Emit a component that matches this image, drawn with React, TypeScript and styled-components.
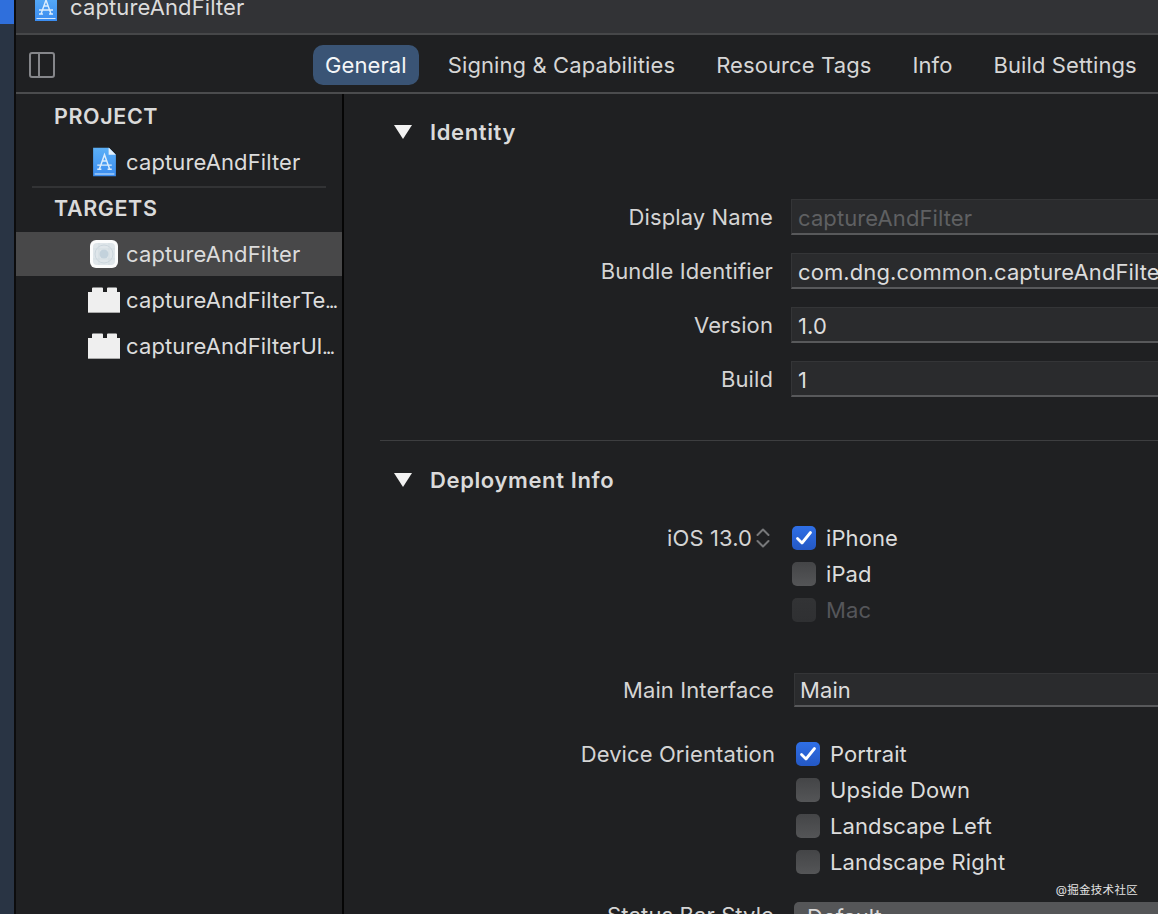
import React from "react";
import styled, { createGlobalStyle } from "styled-components";

const Global = createGlobalStyle`
  html, body { margin: 0; padding: 0; background: #1f2022; }
  body { font-family: Inter, "Noto Sans", "Liberation Sans", sans-serif; }
  * { box-sizing: border-box; }
`;
const Page = styled.div`
  position: relative; display: flex; width: 1158px; height: 914px; overflow: hidden; background: #1f2022;
  -webkit-font-smoothing: antialiased;
`;
const Strip = styled.div`
  width: 16px; flex: none; background: #293444; border-right: 2px solid #0c0c0d;
  &::before { content: ""; display: block; height: 24px; width: 14px; background: #2f6fdc; }
`;
const Main = styled.div`flex: 1; min-width: 0; display: flex; flex-direction: column;`;
const TitleBar = styled.div`
  height: 35px; flex: none; display: flex; align-items: flex-end; gap: 13px; padding: 0 0 12px 19px;
  background: #323336; border-bottom: 2px solid #464749;
  font-size: 22px; line-height: 28px; color: #dcdcdc; letter-spacing: .12px;
`;
const TabBar = styled.div`
  height: 59px; flex: none; display: flex; align-items: center; padding: 3px 0 0 13px;
  border-bottom: 2px solid #4b4c4e; background: #1f2022;
`;
const SideToggle = styled.svg`width: 26px; height: 26px; flex: none; margin-right: 258px;`;
const Tab = styled.div<{ $active?: boolean }>`
  height: 40px; display: flex; align-items: center; padding: 0 12px; margin-right: 17px;
  border-radius: 10px; font-size: 22px; letter-spacing: .1px; white-space: nowrap;
  color: ${p => (p.$active ? "#f4f6f8" : "#d6d6d6")};
  background: ${p => (p.$active ? "#3a5475" : "transparent")};
`;
const Body = styled.div`flex: 1; min-height: 0; display: flex;`;
const Sidebar = styled.div`
  width: 328px; flex: none; border-right: 2px solid #050505; background: #1f2022; padding-top: 1px;
`;
const SideHead = styled.div<{ $lift: number }>`
  height: 44px; display: flex; align-items: center; padding: 0 0 ${p => p.$lift}px 38px;
  font-size: 21.5px; font-weight: 600; color: #dadada; letter-spacing: .6px;
`;
const SideRow = styled.div<{ $selected?: boolean }>`
  height: 46px; display: flex; align-items: center; position: relative; padding-left: 110px;
  font-size: 22px; letter-spacing: .12px; color: #dcdcdc; white-space: pre;
  background: ${p => (p.$selected ? "#484849" : "transparent")};
  ${p => p.$selected && "height: 44px; margin-bottom: 1px;"}
`;
const Squeezed = styled.span`letter-spacing: -.4px;`;
const Dots = styled.span`font-size: 20px; letter-spacing: -2px;`;
const RowIcon = styled.svg<{ $left: number }>`
  position: absolute; left: ${p => p.$left}px; top: 50%; transform: translateY(-50%);
`;
const SideDivider = styled.div`height: 2px; background: #323335; margin: 1px 16px 0 16px;`;
const Content = styled.div`flex: 1; min-width: 0; padding-left: 36px; overflow: hidden;`;
const Heading = styled.div<{ $h: number }>`
  height: ${p => p.$h}px; display: flex; align-items: center; gap: 18px; padding-left: 14px;
  font-size: 22px; font-weight: 600; color: #dadada; letter-spacing: .62px;
`;
const Triangle = styled.div`
  width: 18px; height: 14px; background: #f2f2f2; clip-path: polygon(0 0, 100% 0, 50% 100%);
`;
const Fields = styled.div`display: flex; flex-direction: column; gap: 18px; margin-top: 29px;`;
const FormRow = styled.div<{ $top?: number; $labelEnd: number; $gap?: number; $start?: boolean }>`
  display: grid; grid-template-columns: ${p => p.$labelEnd}px 1fr; column-gap: ${p => p.$gap ?? 18}px;
  align-items: ${p => (p.$start ? "start" : "center")};
  margin-top: ${p => p.$top ?? 0}px;
`;
const Label = styled.div`
  text-align: right; font-size: 22px; letter-spacing: .1px; color: #d4d4d4; white-space: nowrap;
  display: flex; justify-content: flex-end; align-items: center;
`;
const TallLabel = styled(Label)`height: 36px;`;
const Field = styled.div<{ $dim?: boolean; $h?: number; $pad?: number }>`
  height: ${p => p.$h ?? 36}px; margin-right: -10px; display: flex; align-items: center;
  padding: ${p => (p.$h ? 0 : 2)}px 0 0 ${p => p.$pad ?? 6}px;
  background: #2a2b2d; border-top: 1px solid #343537; border-left: 1px solid #343537; border-bottom: 2px solid #58595b;
  font-size: 22px; letter-spacing: .1px; white-space: nowrap; overflow: hidden;
  color: ${p => (p.$dim ? "#5f6062" : "#dcdcdc")};
`;
const Divider = styled.div`height: 1px; background: #3d3e40; margin-top: 43px;`;
const CheckRow = styled.div`height: 36px; display: flex; align-items: center; gap: 10px;`;
const CheckGroup = styled.div`display: flex; flex-direction: column;`;
const Box = styled.div<{ $on?: boolean; $off?: boolean }>`
  width: 24px; height: 24px; border-radius: 5px; flex: none; display: flex; align-items: center; justify-content: center;
  background: ${p => (p.$on ? "linear-gradient(#2f6fe6,#2458c4)" : p.$off ? "linear-gradient(#323335,#2f3032)" : "linear-gradient(#444547,#545557)")};
`;
const CheckText = styled.div<{ $off?: boolean }>`
  font-size: 22px; letter-spacing: .1px; color: ${p => (p.$off ? "#55565a" : "#dcdcdc")}; white-space: nowrap;
`;
const Stepper = styled.svg`margin: 0 2px 0 3px; flex: none;`;
const CutField = styled.div`
  height: 30px; margin-right: -10px; padding-left: 13px; background: #555658; border-radius: 5px 0 0 0;
  font-size: 22px; line-height: 22px; padding-top: 4px; color: #dcdcdc; overflow: hidden;
`;
const CutLabel = styled(Label)`height: 30px; align-items: flex-start; line-height: 24px; padding-top: 1px;`;
const Mark = styled.div`
  position: absolute; right: 20px; top: 882px; font-size: 11.5px; line-height: 16px; letter-spacing: .3px; color: #e4e4e4;
  font-family: Inter, "Noto Sans CJK SC", sans-serif;
`;
const DocGlyph = styled.svg`flex: none; display: block;`;

const DocPaths = () => (
  <>
    <defs>
      <linearGradient id="docFill" x1="0" y1="0" x2="0" y2="1">
        <stop offset="0" stopColor="#5cb0f7" />
        <stop offset="1" stopColor="#3a8cf0" />
      </linearGradient>
    </defs>
    <path d="M0 0h15l7 7v21H0z" fill="url(#docFill)" />
    <path d="M15 0l7 7h-7z" fill="#e4f1fc" />
    <path d="M1.5 25h19v1h-19z" fill="#d6e9fc" />
    <path d="M6 21 11 7l5 14M4 17h14M4 21h4M14 21h4M8.5 13h5" stroke="#dcedfc" strokeWidth="1.4" fill="none" />
  </>
);
const TargetIcon = () => (
  <RowIcon $left={74} width={28} height={28} viewBox="0 0 28 28">
    <rect width="28" height="28" rx="6" fill="#fbfcfc" />
    <rect x="3" y="3" width="22" height="22" rx="4" fill="#dfe6ea" />
    <circle cx="14" cy="14" r="9" fill="none" stroke="#cbd6dd" />
    <circle cx="14" cy="14" r="4.5" fill="#c3d2dc" />
    <path d="M3 9h22M3 19h22M9 3v22M19 3v22" stroke="#d0dae0" strokeWidth=".7" />
  </RowIcon>
);
const BrickIcon = () => (
  <RowIcon $left={72} width={32} height={26} viewBox="0 0 32 26">
    <path d="M4 5V1.5Q4 .5 5 .5h9q1 0 1 1V5h4V1.5q0-1 1-1h8q1 0 1 1V5h3v21H0V5z" fill="#efefef" />
    <path d="M0 25h32v1H0z" fill="#a9a9a9" />
  </RowIcon>
);
const Check = ({ on, label, off }: { on?: boolean; label: string; off?: boolean }) => (
  <CheckRow>
    <Box $on={on} $off={off}>
      {on && (
        <svg width="18" height="16" viewBox="0 0 18 16">
          <path d="M2.5 8.5 7 13 15.5 2.5" fill="none" stroke="#fff" strokeWidth="2.8" strokeLinecap="round" strokeLinejoin="round" />
        </svg>
      )}
    </Box>
    <CheckText $off={off}>{label}</CheckText>
  </CheckRow>
);

export default function App() {
  return (
    <Page>
      <Global />
      <Strip />
      <Main>
        <TitleBar>
          <DocGlyph width={22} height={28} viewBox="0 0 22 28"><DocPaths /></DocGlyph>
          captureAndFilter
        </TitleBar>
        <TabBar>
          <SideToggle viewBox="0 0 26 26">
            <rect x="1" y="1" width="24" height="24" rx="2" fill="none" stroke="#85868a" strokeWidth="2" />
            <path d="M10 1v24" stroke="#85868a" strokeWidth="2" />
          </SideToggle>
          <Tab $active>General</Tab>
          <Tab>Signing &amp; Capabilities</Tab>
          <Tab>Resource Tags</Tab>
          <Tab>Info</Tab>
          <Tab>Build Settings</Tab>
        </TabBar>
        <Body>
          <Sidebar>
            <SideHead $lift={2}>PROJECT</SideHead>
            <SideRow>
              <RowIcon $left={77} width={23} height={29} viewBox="0 0 22 28"><DocPaths /></RowIcon>
              captureAndFilter
            </SideRow>
            <SideDivider />
            <SideHead $lift={4}>TARGETS</SideHead>
            <SideRow $selected>
              <TargetIcon />
              captureAndFilter
            </SideRow>
            <SideRow>
              <BrickIcon />
              <span>captureAndFilter<Squeezed>Te</Squeezed><Dots>...</Dots></span>
            </SideRow>
            <SideRow>
              <BrickIcon />
              <span>captureAndFilter<Squeezed>UI</Squeezed><Dots>...</Dots></span>
            </SideRow>
          </Sidebar>
          <Content>
            <Heading $h={76}>
              <Triangle />
              Identity
            </Heading>
            <Fields>
              <FormRow $labelEnd={393}>
                <Label>Display Name</Label>
                <Field $dim>captureAndFilter</Field>
              </FormRow>
              <FormRow $labelEnd={393}>
                <Label>Bundle Identifier</Label>
                <Field>com.dng.common.captureAndFilter</Field>
              </FormRow>
              <FormRow $labelEnd={393}>
                <Label>Version</Label>
                <Field>1.0</Field>
              </FormRow>
              <FormRow $labelEnd={393}>
                <Label>Build</Label>
                <Field>1</Field>
              </FormRow>
            </Fields>
            <Divider />
            <Heading $h={78}>
              <Triangle />
              Deployment Info
            </Heading>
            <FormRow $labelEnd={393} $top={1} $gap={19} $start>
              <TallLabel>
                iOS 13.0
                <Stepper width="16" height="22" viewBox="0 0 16 22">
                  <path d="M2.5 8 8 2.5 13.5 8M2.5 14 8 19.5 13.5 14" fill="none" stroke="#77787a" strokeWidth="2" strokeLinecap="round" strokeLinejoin="round" />
                </Stepper>
              </TallLabel>
              <CheckGroup>
                <Check on label="iPhone" />
                <Check label="iPad" />
                <Check off label="Mac" />
              </CheckGroup>
            </FormRow>
            <FormRow $labelEnd={394} $top={45} $gap={20}>
              <Label>Main Interface</Label>
              <Field $h={34} $pad={5}>Main</Field>
            </FormRow>
            <FormRow $labelEnd={395} $top={29} $gap={21} $start>
              <TallLabel>Device Orientation</TallLabel>
              <CheckGroup>
                <Check on label="Portrait" />
                <Check label="Upside Down" />
                <Check label="Landscape Left" />
                <Check label="Landscape Right" />
              </CheckGroup>
            </FormRow>
            <FormRow $labelEnd={394} $top={22} $gap={20} $start>
              <CutLabel>Status Bar Style</CutLabel>
              <CutField>Default</CutField>
            </FormRow>
          </Content>
        </Body>
      </Main>
      <Mark>@掘金技术社区</Mark>
    </Page>
  );
}
